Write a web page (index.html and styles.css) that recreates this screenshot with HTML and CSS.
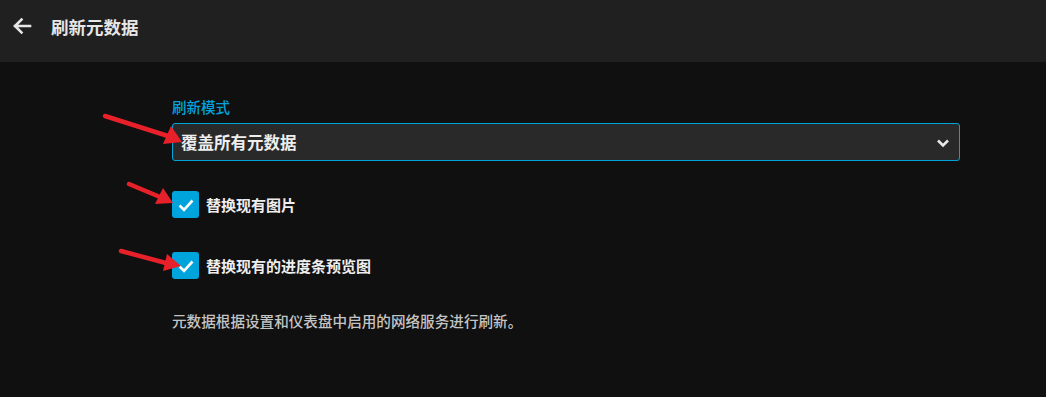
FILE: index.html
```html
<!DOCTYPE html>
<html lang="zh">
<head>
<meta charset="utf-8">
<link rel="stylesheet" href="styles.css">
</head>
<body>
<header class="header">
  <button class="back" aria-label="back">
    <svg width="20" height="18" viewBox="0 0 20 18"><path d="M18 9H3M9.5 2.5L3 9l6.5 6.5" fill="none" stroke="#e6e6e6" stroke-width="2.6" stroke-linecap="square"/></svg>
  </button>
  <h1 class="title">刷新元数据</h1>
</header>
<main class="content">
  <div class="form">
    <label class="field-label">刷新模式</label>
    <div class="select">
      <span class="select-text">覆盖所有元数据</span>
      <svg class="chevron" width="14" height="10" viewBox="0 0 14 10"><path d="M2 2.5l5 5 5-5" fill="none" stroke="#e8e8e8" stroke-width="2.6"/></svg>
    </div>
    <label class="check">
      <span class="box"><svg width="18" height="14" viewBox="0 0 18 14"><path d="M2.5 7.5l4.5 4.3L15.5 2.5" fill="none" stroke="#fff" stroke-width="2.6"/></svg></span>
      <span class="check-text">替换现有图片</span>
    </label>
    <label class="check">
      <span class="box"><svg width="18" height="14" viewBox="0 0 18 14"><path d="M2.5 7.5l4.5 4.3L15.5 2.5" fill="none" stroke="#fff" stroke-width="2.6"/></svg></span>
      <span class="check-text">替换现有的进度条预览图</span>
    </label>
    <p class="desc">元数据根据设置和仪表盘中启用的网络服务进行刷新。</p>
  </div>
</main>
<svg class="arrows" width="1046" height="397" viewBox="0 0 1046 397">
  <g stroke="#e8202a" stroke-width="4.5" stroke-linecap="round" fill="#e8202a">
    <line x1="105" y1="116" x2="168" y2="136"/>
    <line x1="129" y1="184" x2="160" y2="197"/>
    <line x1="121" y1="251" x2="166" y2="263"/>
  </g>
  <g fill="#e8202a">
    <polygon points="182,142 163,144 171,126"/>
    <polygon points="173,203 155,204 163,188"/>
    <polygon points="181,266 163,271 167,254"/>
  </g>
</svg>
</body>
</html>
```
FILE: styles.css
```css
* { box-sizing: border-box; }
html, body { margin: 0; padding: 0; }
body {
  width: 1046px;
  height: 397px;
  background: #101010;
  font-family: "Noto Sans CJK SC", "Noto Sans", sans-serif;
  color: #e8e8e8;
  position: relative;
  overflow: hidden;
}
.header {
  height: 62px;
  background: #202020;
  display: flex;
  align-items: center;
  padding-left: 12px;
  padding-bottom: 10px;
}
.back {
  background: none;
  border: 0;
  padding: 0;
  width: 20px;
  height: 18px;
  display: flex;
  align-items: center;
  justify-content: center;
}
.title {
  margin: 0 0 0 19px;
  font-size: 17.5px;
  font-weight: 700;
  color: #e6e6e6;
}
.content {
  padding: 35px 0 0 172px;
}
.form {
  width: 788px;
  display: flex;
  flex-direction: column;
}
.field-label {
  color: #00a4dc;
  font-size: 14.5px;
  font-weight: 500;
  line-height: 19px;
  margin-bottom: 7px;
}
.select {
  height: 38px;
  border: 1px solid #00a4dc;
  border-radius: 3px;
  background: #292929;
  display: flex;
  align-items: center;
  justify-content: space-between;
  padding: 0 8px 0 8px;
}
.select-text {
  font-size: 16.5px;
  font-weight: 700;
  color: #eeeeee;
}
.chevron { margin-right: 1px; margin-top: 2px; }
.check {
  display: flex;
  align-items: center;
  height: 27px;
  margin-top: 30px;
}
.check + .check { margin-top: 34px; }
.box {
  width: 27px;
  height: 27px;
  border-radius: 3px;
  background: #00a4dc;
  display: flex;
  align-items: center;
  justify-content: center;
}
.check-text {
  margin-left: 7px;
  font-size: 15px;
  font-weight: 700;
  color: #eeeeee;
}
.desc {
  margin: 32px 0 0;
  font-size: 14.6px;
  font-weight: 500;
  color: #c4c4c4;
  line-height: 20px;
}
.arrows {
  position: absolute;
  left: 0;
  top: 0;
  pointer-events: none;
}
```
